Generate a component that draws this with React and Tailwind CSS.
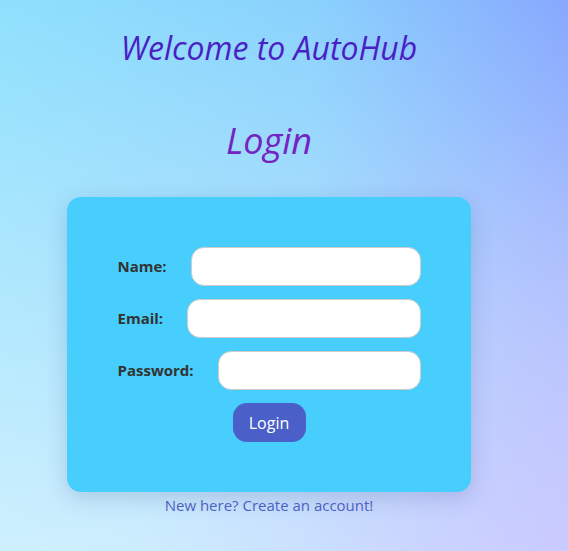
import React from "react";

const fields = [
  { id: "name", label: "Name:", type: "text" },
  { id: "email", label: "Email:", type: "email" },
  { id: "password", label: "Password:", type: "password" },
];

export default function App() {
  return (
    <div className="min-h-screen w-full bg-[radial-gradient(circle_at_100%_100%,rgba(200,190,255,0.6),rgba(200,190,255,0)_55%),linear-gradient(to_bottom,rgba(240,248,255,0)_0%,rgba(240,248,255,0.65)_100%),linear-gradient(to_right,#8fe0fd_0%,#8ad2fd_55%,#88a8fe_100%)] font-['Open_Sans',sans-serif]">
      <div className="w-[538px] flex flex-col items-center pt-[26px]">
        <h1 className="text-[32px] italic text-[#4a1fc4] leading-[43px]">Welcome to AutoHub</h1>
        <h2 className="mt-[48px] text-[36px] italic text-[#7424c2] leading-[48px]">Login</h2>

        {/* Card */}
        <form
          onSubmit={(e) => e.preventDefault()}
          className="mt-[32px] w-[404px] bg-[#47cefc] rounded-[14px] shadow-[0_6px_22px_rgba(60,80,140,0.22)] py-[50px] flex flex-col items-center gap-[13px]"
        >
          {fields.map((f) => (
            <div key={f.id} className="w-[303px] flex items-center gap-[24px]">
              <label htmlFor={f.id} className="text-[15px] font-bold text-[#333]">
                {f.label}
              </label>
              <input
                id={f.id}
                type={f.type}
                className="flex-1 min-w-0 h-[39px] bg-white rounded-[13px] border border-[#ccc] px-3 outline-none"
              />
            </div>
          ))}
          <button
            type="submit"
            className="w-[73px] h-[39px] rounded-[14px] bg-[#4a5fc8] text-white text-[16px]"
          >
            Login
          </button>
        </form>

        <a href="#" className="mt-[2px] text-[15px] text-[#4c5fc4]">
          New here? Create an account!
        </a>
      </div>
    </div>
  );
}
